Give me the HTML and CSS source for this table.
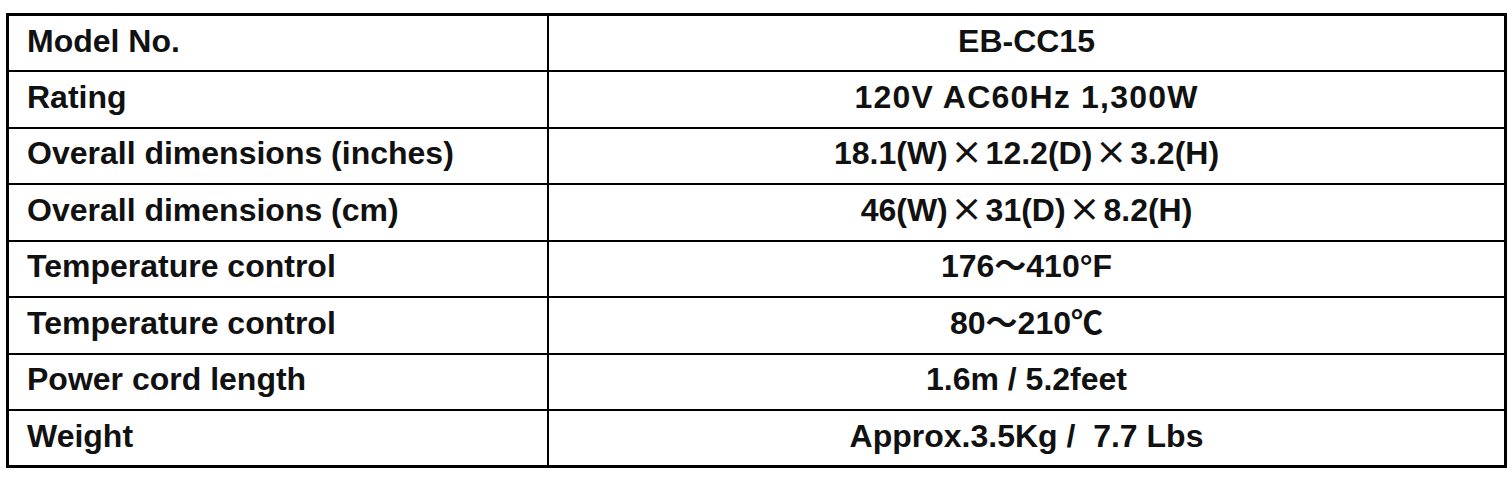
FILE: index.html
```html
<!DOCTYPE html>
<html lang="en">
<head>
<meta charset="utf-8">
<title>Specifications</title>
<link rel="stylesheet" href="styles.css">
</head>
<body>
<table class="spec">
  <tbody>
    <tr><td class="label">Model No.</td><td class="value">EB-CC15</td></tr>
    <tr><td class="label">Rating</td><td class="value wide">120V AC60Hz 1,300W</td></tr>
    <tr><td class="label">Overall dimensions (inches)</td><td class="value">18.1(W)<span class="times">×</span>12.2(D)<span class="times">×</span>3.2(H)</td></tr>
    <tr><td class="label">Overall dimensions (cm)</td><td class="value">46(W)<span class="times">×</span>31(D)<span class="times">×</span>8.2(H)</td></tr>
    <tr><td class="label">Temperature control</td><td class="value">176～410°F</td></tr>
    <tr><td class="label">Temperature control</td><td class="value">80～210℃</td></tr>
    <tr><td class="label">Power cord length</td><td class="value">1.6m / 5.2feet</td></tr>
    <tr><td class="label">Weight</td><td class="value">Approx.3.5Kg / &nbsp;7.7 Lbs</td></tr>
  </tbody>
</table>
</body>
</html>
```

FILE: styles.css
```css
html, body {
  margin: 0;
  padding: 0;
  background: #ffffff;
}

body {
  padding: 13px 0 0 6px;
  font-family: "Liberation Sans", Arial, "Noto Sans CJK JP", sans-serif;
  font-weight: bold;
  font-size: 32px;
  color: #111111;
}

.spec {
  border-collapse: collapse;
  width: 1501px;
  table-layout: fixed;
  border: 3px solid #000;
}

.spec tr {
  height: 56.5px;
}

.spec td {
  border: 2px solid #000;
  padding: 0 0 5px 0;
  line-height: 36px;
  white-space: nowrap;
  vertical-align: middle;
}

.spec .label {
  width: 520px;
  padding-left: 18px;
  text-align: left;
}

.spec .value {
  text-align: center;
}

.spec .wide {
  letter-spacing: 1.2px;
}

.times {
  font-family: "DejaVu Sans", sans-serif;
  font-weight: normal;
  font-size: 38px;
  line-height: 0;
  margin: 0 3px;
}
```
